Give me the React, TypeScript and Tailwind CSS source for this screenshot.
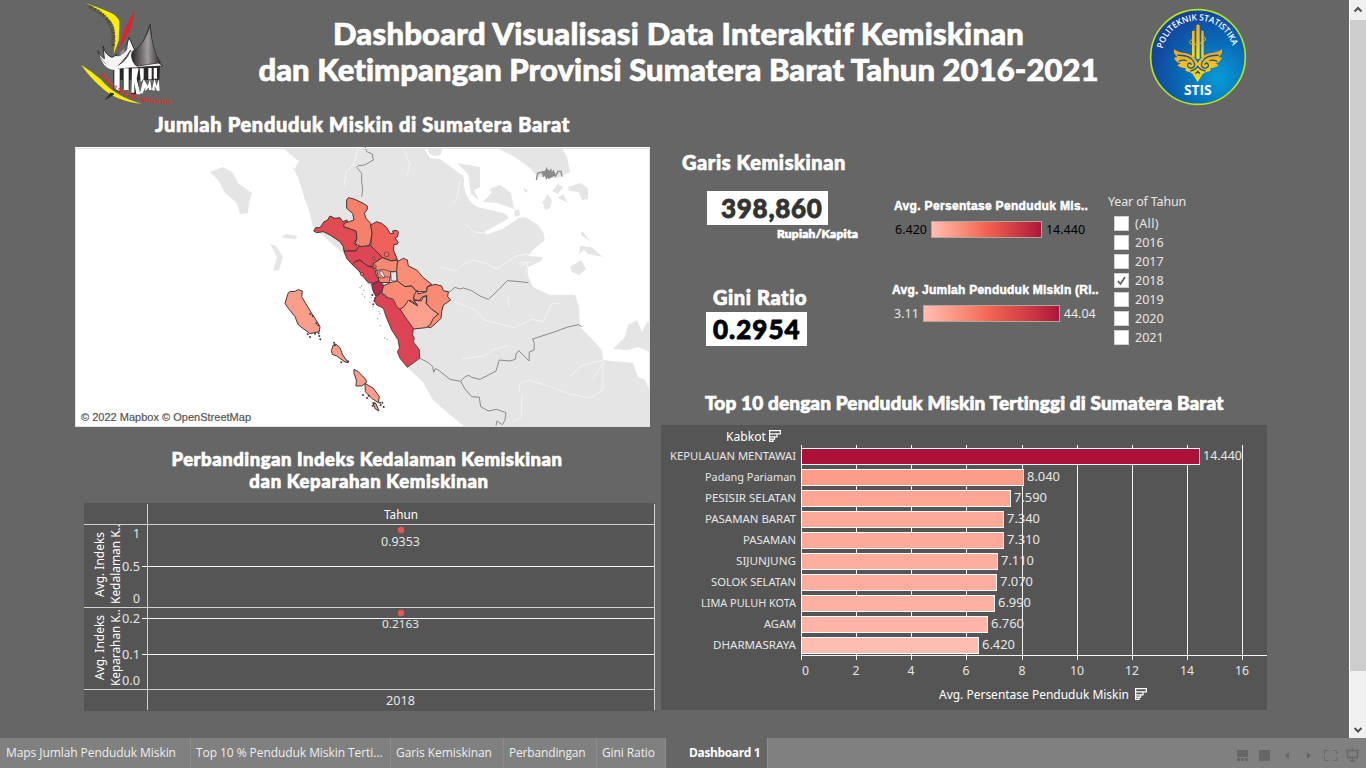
import { useLayoutEffect, useRef, useState } from "react";

/* Text spaced out so that its line fills exactly `w` pixels. */
function Fit({ w, className = "", children }: { w: number; className?: string; children: string }) {
  const ref = useRef<HTMLSpanElement>(null);
  const [gap, setGap] = useState(0);
  useLayoutEffect(() => {
    if (ref.current) setGap((w - ref.current.offsetWidth) / children.length);
  }, [w, children]);
  return (
    <span ref={ref} className={"inline-block shrink-0 whitespace-nowrap " + className} style={{ letterSpacing: gap }}>
      {children}
    </span>
  );
}

const display = "font-['Lato'] font-black text-white [-webkit-text-stroke:0.7px_currentColor]";

type LabelProps = { x: number; y: number; w: number; size?: number; anchor?: "start" | "end"; weight?: number; fill?: string; children: string };
function Label({ x, y, w, size = 12.5, anchor = "start", weight = 400, fill = "#e6e6e6", children }: LabelProps) {
  return (
    <text x={anchor === "end" ? x - w : x} y={y} fontSize={size} fontWeight={weight} fill={fill} textLength={w} lengthAdjust="spacingAndGlyphs">
      {children}
    </text>
  );
}

function MinangLogo() {
  return (
    <svg className="block h-[110px] w-[120px]" viewBox="0 0 360 330">
      <defs>
        <linearGradient id="roof" x1="0" y1="0" x2="1" y2="0">
          <stop offset="0" stopColor="#2a2627" />
          <stop offset=".55" stopColor="#a09c9d" />
          <stop offset="1" stopColor="#2c2829" />
        </linearGradient>
        <path id="arcTop" d="M54 24 Q112 50 122 92 Q128 122 121 162" />
        <path id="arcLow" d="M92 226 Q150 312 300 312" />
      </defs>
      <path d="M47 8 L112 34 Q146 48 148 66 L146 122 L131 162 Q139 104 131 78 Q116 44 47 8Z" fill="#ffee00" />
      <path d="M195 34 Q178 56 167 82 L143 153 L180 92Z" fill="#e0222b" />
      <path d="M33 194 Q68 216 92 238 Q138 292 215 311 Q135 304 90 258 Q60 232 33 194Z" fill="#ffee00" />
      <path d="M112 198 L270 196 L268 240 L132 240 L130 208Z" fill="#2b2728" />
      <path d="M130 207 H151 V278 L130 268Z M158 205 H179 V268 H158Z M182 205 H206 V283 H184Z" fill="#2b2728" />
      <path d="M133 207 H149 V274 L133 266Z M161 205 H176 V270 H161Z M186 205 H206 L200 236 L211 283 H199 L193 248 V278 H184Z M209 205 H221 V236 L212 246Z M210 278 L221 238 L233 258 L240 238 L245 270 H237 V262 L226 274 V262 L217 281Z M246 270 L253 236 L260 258 L266 238 L269 272 H261 L254 258 V272Z M235 204 H245 V238 H235Z M251 204 H261 V236 H251Z" fill="#fff" />
      <path d="M83 152 Q92 190 130 208 Q158 190 182 151 Q184 190 203 202 L279 198 Q234 172 246 130 L240 72 Q225 128 195 153 L177 112 Q168 155 126 172 Q105 164 99 138 L103 176 Q90 168 83 152Z" fill="#f4f4f4" stroke="#302c2d" strokeWidth="3" />
      <path d="M240 78 Q225 132 188 154 Q182 165 190 200 L272 188 Q248 156 240 78Z" fill="url(#roof)" stroke="#282425" strokeWidth="2" />
      <path d="M176 114 Q166 152 134 166 Q150 176 171 149Z" fill="url(#roof)" />
      <path d="M88 160 Q96 196 132 202 Q166 192 183 152 Q181 190 204 202 Q155 202 131 210 Q96 204 88 160Z" fill="#fff" />
      <path d="M106 299 L132 282 L120 279" stroke="#302c2d" strokeWidth="3" fill="#302c2d" />
      <text className="font-['Liberation_Sans']" fontSize="16" fontWeight="700" fill="#4c4527"><textPath href="#arcTop" textLength="148">IKATAN KELUARGA</textPath></text>
      <text className="font-['Liberation_Sans']" fontSize="19" fontWeight="700" fill="#d83226"><textPath href="#arcLow" textLength="238">MAHASISWA MINANG</textPath></text>
    </svg>
  );
}

function StisLogo() {
  return (
    <svg className="block h-[110px] w-[120px]" viewBox="0 0 360 330">
      <defs>
        <radialGradient id="blue" cx=".72" cy=".72" r=".75">
          <stop offset="0" stopColor="#079bd6" />
          <stop offset=".55" stopColor="#0868b5" />
          <stop offset="1" stopColor="#15429a" />
        </radialGradient>
        <linearGradient id="gold" x1="0" y1="0" x2="0" y2="1">
          <stop offset="0" stopColor="#f4a51c" />
          <stop offset="1" stopColor="#ffdc16" />
        </linearGradient>
        <path id="rim" d="M68 146 A108 108 0 0 1 279 146" />
      </defs>
      <circle cx="174" cy="171" r="142" fill="url(#blue)" stroke="#b5e619" strokeWidth="5" />
      <text className="font-['Open_Sans']" fontSize="26" fontWeight="600" fill="#fff"><textPath href="#rim" textLength="284" lengthAdjust="spacingAndGlyphs">POLITEKNIK STATISTIKA</textPath></text>
      <g fill="url(#gold)">
        <path d="M169 76 L174 73 L179 76 V176 H169Z M156 94 L164 91 V172 H156Z M184 91 L191 94 V172 H184Z" />
        <path d="M102 148 Q116 158 138 160 Q158 164 168 180 L173 190 L179 180 Q189 164 210 160 Q232 158 246 148 Q248 164 235 171 L246 173 Q240 187 226 190 L236 196 Q226 206 211 204 Q216 214 198 216 L188 222 L173 246 L158 222 L149 216 Q132 214 137 204 Q122 206 112 196 L122 190 Q108 187 102 173 L113 171 Q100 164 102 148Z" />
      </g>
      <g fill="none" stroke="#0b56a5" strokeWidth="4">
        <path d="M112 166 Q150 164 162 186 Q168 203 152 205 Q138 202 145 190 Q151 187 154 194 M236 166 Q198 164 186 186 Q180 203 196 205 Q210 202 203 190 Q197 187 194 194 M116 184 Q130 178 140 182 M232 184 Q218 178 208 182 M151 213 Q166 210 173 199 Q181 210 197 213 M166 221 L173 214 L180 221" />
      </g>
      <path d="M158 118 Q145 124 151 131 Q169 138 192 124 Q202 115 191 111" fill="none" stroke="#f5b51b" strokeWidth="3" />
      <text x="132" y="286" className="font-['Open_Sans']" fontSize="40" fontWeight="700" fill="#fff" textLength="83" lengthAdjust="spacingAndGlyphs">STIS</text>
    </svg>
  );
}

function SumatraMap() {
  return (
    <svg className="block h-[280px] w-[575px] bg-white" viewBox="75 147 575 280">
      <g fill="#e5e5e5">
        <path d="M283 148 L290 154 L297 160 L293 168 L298 177 L305 200 L309 210 L313 227 L345 255 L380 300 L407 367 L423 382 L433 400 L450 415 L465 427 H650 V392 L645 380 L638 377 L633 363 L603 360 L602 350 L590 337 L580 327 L579 307 L575 295 L550 295 L533 287 L528 275 L528 267 L541 261 L543 257 L528 256 L533 250 L545 240 L543 232 L538 225 L525 217 L513 219 L500 228 L484 232 L508 219 L508 212 L490 208 L475 203 L466 190 L463 175 L450 163 L440 159 L430 158 L424 148Z" />
        <path d="M427 148 Q430 159 440 155 L443 148Z M457 163 L480 167 L480 187 L474 190 L479 200 L471 194 L468 174Z M491 188 L500 185 L511 193 L514 209 L497 203 L482 202Z M514 211 L519 209 L520 215 L515 217Z M497 148 L515 157 L530 168 L538 177 L557 178 L570 172 L567 157 L562 148Z M568 187 L580 183 L588 188 L588 199 L582 200 L579 192 L569 191Z M552 191 L558 184 L563 187 L558 194Z M543 203 L547 194 L552 200 L550 208 L545 210Z M523 188 L528 190 L526 193Z M558 198 L563 194 L568 203Z M541 202 L548 198 L551 203Z M580 246 L591 247 L603 257 L588 254 L584 250 L579 254Z M570 267 L581 260 L586 269 L579 275 L572 272Z M582 231 L591 242 L581 235Z M613 349 L625 337 L628 325 L637 320 L642 332 L647 322 L650 323 V352 L638 347 L627 350Z" />
        <path d="M210 172 L223 167 L232 172 L238 183 L252 193 L249 203 L248 213 L240 214 L237 203 L225 193 L218 180Z M282 236 L287 234 L297 236 L296 239 L283 238Z M270 244 L276 246 L283 257 L279 270 L273 271 L277 257Z" />
      </g>
      <path d="M283 158 L290 162 L299 160 L295 169 L288 161Z" fill="#fff" />
      <g fill="none" stroke="#f4f4f4" strokeWidth="1">
        <path d="M358 149 L353 165 L346 172 L344 187 M441 267 L455 271 L462 265 L473 260 L485 263 L497 269 L516 256 L535 253 M465 224 L474 232 L486 233 M460 180 L457 198 L453 204 M455 302 L475 310 L484 320 L515 328 L532 319 L543 322 L552 303 L560 304 M462 359 L484 356 L494 349 L508 346 M520 392 L519 384 L529 380 L548 386 L570 394 L590 398 L603 390 L603 360 L583 365 L570 376 M603 362 L593 379 M522 395 L521 418 L513 421 M508 297 L509 307 M404 150 L410 164 L407 176 M519 263 L532 262 M520 266 L528 263 L526 274" />
        <path d="M465 182 Q467 202 480 206 L505 212 L515 219 L501 228 L486 233" strokeWidth="3" stroke="#fff" />
        <path d="M440 157 L463 174 M480 203 L491 191" strokeWidth="3" stroke="#fff" />
      </g>
      <g transform="translate(400 140) scale(.33333)" fill="none" stroke="#8a8a8a" strokeWidth="3">
        <path d="M143 457 L150 455 L165 442 L180 447 L190 444 L215 452 L240 468 L265 478 L290 455 L322 422 L350 424 L385 428" />
        <path d="M60 655 L85 668 L98 680 L101 697 L106 686 L115 690 L150 718 L182 724 L195 710 L207 706 L215 712 L240 718 L266 705 L288 693 L298 660 L330 663 L346 658 L348 642 L356 632 L377 652 L387 663 L388 636 L402 630 L403 610 L398 597 L460 577 L500 562 L535 554 L545 560" />
        <path d="M182 724 L195 747 L215 770 L238 772 L242 800 L265 813 L290 808 L318 818 L315 840 L307 854 L291 843 L288 857" />
        <path d="M-105 20 L-100 35 L-83 42 L-80 60 L-106 75 L-125 77 L-130 82 L-115 100 L-115 125 L-112 150 L-115 170" />
        <path d="M409 120 L413 100 L430 95 L430 110 L440 86 L446 116 L453 87 L452 108 L460 93 L467 108 L474 94 L483 94 L486 110 M425 102 L449 97 L465 108 M438 91 L439 118 M442 103 L461 101" strokeWidth="4" />
        <path d="M426 98 L442 88 L452 94 L464 98 L462 108 L448 116 L436 110Z" fill="#8a8a8a" stroke="none" />
      </g>
      <g transform="translate(280 180) scale(.33333)" stroke="#453536" strokeWidth="3" strokeLinejoin="round">
        <path fill="#e04a53" d="M101 153 L107 143 L120 143 L132 125 L142 121 L150 108 L165 115 L180 113 L188 125 L201 120 L203 130 L191 140 L215 147 L228 153 L231 175 L222 188 L235 205 L228 213 L192 213 L190 200 L180 185 L150 165 L130 155 L110 158Z" />
        <path fill="#f5806c" d="M200 60 L205 53 L222 57 L250 70 L262 78 L262 88 L253 100 L258 115 L272 130 L276 160 L272 185 L268 195 L250 203 L225 192 L231 175 L228 153 L191 140 L192 130 L222 120 L218 100 L200 85Z" />
        <path fill="#ef6259" d="M272 135 L290 125 L305 130 L320 142 L330 160 L340 161 L338 153 L348 151 L355 155 L353 170 L345 174 L355 187 L350 194 L342 193 L340 210 L352 238 L335 243 L307 233 L290 215 L272 197 L276 160Z" />
        <path fill="#dd4654" d="M192 213 L228 213 L235 200 L272 197 L290 215 L307 233 L285 250 L280 260 L262 258 L240 240 L225 245 L218 255 L200 235Z" />
        <path fill="#dc4454" d="M225 245 L240 240 L262 258 L275 262 L285 268 L290 290 L298 300 L280 310 L265 308 L250 290 L235 270 L218 255Z" />
        <path fill="#b8294e" d="M275 313 L300 303 L310 315 L310 325 L300 340 L288 350 L280 335Z" />
        <path fill="#f88a73" d="M278 252 L307 233 L335 243 L353 240 L352 275 L333 275 L328 308 L298 307 L290 270Z" />
        <path fill="none" strokeWidth="2" d="M290 272 L310 268 L333 275 M295 290 L305 295 L320 290 L330 292" />
        <path fill="#fff" strokeWidth="2" d="M299 274 L306 273 L315 291 L310 292 L301 283Z" />
        <path fill="#e5e5e5" strokeWidth="2" d="M332 276 L350 275 L351 304 L334 302Z" />
        <path fill="#f98d76" d="M352 245 L370 235 L382 240 L385 258 L410 270 L430 293 L455 313 L442 320 L440 335 L410 335 L395 318 L375 320 L352 305 L350 275Z" />
        <path fill="#f98b75" d="M310 318 L330 308 L352 303 L375 320 L395 318 L410 335 L402 350 L402 362 L415 378 L390 360 L380 370 L370 385 L355 388 L335 365 L315 345 L305 340Z" />
        <path fill="#f98b75" d="M442 320 L465 313 L485 318 L490 332 L505 335 L503 350 L512 360 L498 370 L490 375 L485 395 L483 415 L465 432 L452 443 L441 441 L450 420 L475 402 L450 385 L440 370 L440 346 L425 352 L420 361 L402 360 L402 345 L412 330 L415 342 L440 335Z" />
        <path fill="#fba08d" d="M360 388 L372 380 L385 361 L414 378 L402 361 L424 363 L430 350 L440 350 L438 370 L455 388 L475 402 L460 415 L450 435 L438 443 L400 447 L385 430Z" />
        <path fill="#dc4353" strokeWidth="2.5" d="M288 350 L305 338 L315 350 L340 358 L350 380 L362 390 L375 410 L400 445 L398 465 L403 475 L400 485 L418 510 L419 535 L382 562 L360 535 L352 515 L358 505 L355 480 L335 450 L318 410 L310 385 L290 375 L283 362Z" />
        <g fill="#ee6d60" strokeWidth="2"><circle cx="320" cy="223" r="7" /><circle cx="281" cy="235" r="4" /><circle cx="284" cy="260" r="5" /><circle cx="246" cy="282" r="5" /></g>
      </g>
      <g transform="translate(270 280) scale(.33333)" fill="#fb9d8b" stroke="#453536" strokeWidth="3" strokeLinejoin="round">
        <path d="M55 38 L60 35 L75 34 L85 29 L97 33 L95 50 L107 70 L125 100 L135 115 L150 140 L148 155 L120 161 L85 135 L75 110 L55 85 L45 70Z" />
        <path d="M190 195 L197 192 L210 203 L218 225 L235 248 L225 246 L200 228 L187 223 L184 212Z M252 268 L265 275 L287 298 L290 307 L275 318 L258 318 L259 300 L252 280Z M285 310 L310 325 L328 350 L325 368 L305 355 L286 335Z M308 368 L318 371 L327 393 L316 387Z" />
        <g fill="#453536" stroke="none">
          {[[121, 102], [128, 108], [139, 130], [145, 136], [146, 160], [151, 178], [148, 168], [113, 163], [120, 171], [135, 161], [192, 188], [195, 196], [214, 247], [234, 244], [279, 345], [291, 354], [296, 347], [308, 377], [313, 370], [330, 368], [332, 375], [341, 381], [337, 368], [313, 63], [310, 73], [315, 55], [307, 45]].map(([cx, cy], i) => <circle key={i} cx={cx} cy={cy} r="3" />)}
        </g>
        <g fill="#999" stroke="none">
          {[[275, 18], [282, 31], [277, 43], [284, 51], [270, 23], [304, 52], [309, 80], [327, 95], [323, 116], [331, 137], [344, 174], [352, 178], [300, 67], [330, 101]].map(([cx, cy], i) => <circle key={i} cx={cx} cy={cy} r="2" />)}
        </g>
      </g>
      <path d="M75.5 148.5 H649.5 V426.5 H75.5Z" fill="none" stroke="#e2e2e2" />
      <text x="81" y="421" className="font-['Liberation_Sans']" fontSize="11" fill="#555" stroke="#555" strokeWidth=".2" textLength="170">© 2022 Mapbox © OpenStreetMap</text>
    </svg>
  );
}

function IndexChart() {
  const hlines = [524, 607, 689];
  const grids = [566, 618, 654];
  return (
    <svg className="block h-[208px] w-[571px] bg-[#555555] font-['Noto_Sans']" viewBox="84 503 571 208">
      <g shapeRendering="crispEdges">
        {hlines.map((y) => <rect key={y} x="84" y={y} width="571" height="1" fill="#d0d0d0" />)}
        {grids.map((y) => <rect key={y} x="142" y={y} width="513" height="1" fill="#f5f5f5" />)}
        <rect x="147" y="504" width="1" height="206" fill="#d0d0d0" />
        <rect x="654" y="504" width="1" height="206" fill="#d0d0d0" />
      </g>
      <Label x={384} y={519} w={34} fill="#fff">Tahun</Label>
      <Label x={140} y={538} w={7} anchor="end">1</Label>
      <Label x={140} y={571} w={18} anchor="end">0.5</Label>
      <Label x={140} y={603} w={7} anchor="end">0</Label>
      <Label x={140} y={623} w={18} anchor="end">0.2</Label>
      <Label x={140} y={659} w={18} anchor="end">0.1</Label>
      <Label x={140} y={685} w={18} anchor="end">0.0</Label>
      <Label x={381} y={546} w={39}>0.9353</Label>
      <Label x={382} y={628} w={37} size={11.5}>0.2163</Label>
      <Label x={386} y={705} w={29}>2018</Label>
      <circle cx="401" cy="530" r="3.2" fill="#e15759" />
      <circle cx="401" cy="613" r="3.2" fill="#e15759" />
      <g transform="translate(104 597) rotate(-90)"><Label x={0} y={0} w={65} size={12} fill="#fff">Avg. Indeks</Label></g>
      <g transform="translate(120 604) rotate(-90)"><Label x={0} y={0} w={80} size={12} fill="#fff">Kedalaman K..</Label></g>
      <g transform="translate(104 680) rotate(-90)"><Label x={0} y={0} w={65} size={12} fill="#fff">Avg. Indeks</Label></g>
      <g transform="translate(120 686) rotate(-90)"><Label x={0} y={0} w={77} size={12} fill="#fff">Keparahan K..</Label></g>
    </svg>
  );
}

function SortIcon({ x, y }: { x: number; y: number }) {
  return <path transform={`translate(${x} ${y})`} d="M.6 .6 H11.4 V3.8 H.6Z M.6 3.8 H8 V6.8 H.6Z M.6 6.8 H5.6 V9.200 H.6Z M.6 9.200 H4 V11.4 H.6Z" fill="none" stroke="#fff" strokeWidth="1.2" />;
}

const bars: [string, number, string, number, number, string][] = [
  ["KEPULAUAN MENTAWAI", 126, "14.440", 1200, 38, "#ad1139"],
  ["Padang Pariaman", 91, "8.040", 1024, 32, "#fd9d89"],
  ["PESISIR SELATAN", 91, "7.590", 1011, 32, "#fea593"],
  ["PASAMAN BARAT", 91, "7.340", 1004, 32, "#feaa99"],
  ["PASAMAN", 53, "7.310", 1004, 32, "#feaa9a"],
  ["SIJUNJUNG", 60, "7.110", 998, 32, "#feae9e"],
  ["SOLOK SELATAN", 85, "7.070", 997, 32, "#feae9f"],
  ["LIMA PULUH KOTA", 95, "6.990", 995, 32, "#feb0a1"],
  ["AGAM", 32, "6.760", 988, 32, "#feb5a7"],
  ["DHARMASRAYA", 83, "6.420", 979, 32, "#febdb1"],
];
const ticks = [801, 856, 911, 966, 1022, 1077, 1132, 1187, 1242];

function PovertyChart() {
  return (
    <svg className="block h-[285px] w-[606px] bg-[#555555] font-['Noto_Sans']" viewBox="661 425 606 285">
      <g shapeRendering="crispEdges">
        {ticks.map((x) => <rect key={x} x={x} y="445" width="1" height="215" fill="#f5f5f5" />)}
        <rect x="801" y="655" width="466" height="1" fill="#f5f5f5" />
        {bars.map(([name, , , end, , color], i) => (
          <rect key={name} x="801.5" y={448.5 + i * 21} width={end - 802} height="16" fill={color} stroke="#fff" />
        ))}
      </g>
      <Label x={726} y={441} w={40} fill="#fff">Kabkot</Label>
      <SortIcon x={769} y={430} />
      {bars.map(([name, w, value, end, vw], i) => (
        <g key={name}>
          <Label x={796} y={460 + i * 21} w={w} size={11.5} anchor="end">{name}</Label>
          <Label x={end + 3} y={460 + i * 21} w={vw + 1}>{value}</Label>
        </g>
      ))}
      {ticks.map((x, i) => {
        const w = i > 4 ? 14 : 7;
        return <Label key={x} x={i === 0 ? 802 : x - w / 2} y={675} w={w}>{String(i * 2)}</Label>;
      })}
      <Label x={939} y={699} w={190} fill="#fff">Avg. Persentase Penduduk Miskin</Label>
      <SortIcon x={1135} y={688} />
    </svg>
  );
}

const years: [string, number][] = [["(All)", 24], ["2016", 29], ["2017", 29], ["2018", 29], ["2019", 29], ["2020", 29], ["2021", 29]];

function YearFilter() {
  return (
    <div className="ml-2 w-[100px] pt-[45px] font-['Noto_Sans'] text-[#e6e6e6]">
      <div className="h-[19px] text-[12.5px] leading-[19px]"><Fit w={78}>Year of Tahun</Fit></div>
      <div className="pl-[6px] pt-[3px]">
        {years.map(([y, w]) => (
          <div key={y} className="flex h-[19px] items-center gap-[6px]">
            <span className="flex size-[15px] items-center justify-center border border-[#d0d0d0] bg-white">
              {y === "2018" && (
                <svg className="size-[11px]" viewBox="0 0 11 11"><path d="M2 6 L4.5 9 L9 2" fill="none" stroke="#555" strokeWidth="1.6" /></svg>
              )}
            </span>
            <span className="text-[12.5px] leading-[19px]"><Fit w={w}>{y}</Fit></span>
          </div>
        ))}
      </div>
    </div>
  );
}

const ramp = "h-[17px] border border-[#b0a69e] bg-linear-to-r from-[#ffbeb2] via-[#f26250] to-[#ae123a]";
const legendTitle = "h-[24px] font-['Liberation_Sans'] text-[12px] leading-[20px] font-bold text-white [-webkit-text-stroke:0.5px_white]";

const tabs: [string, number, string][] = [
  ["Maps Jumlah Penduduk Miskin", 170, "w-[191px] pl-[6px]"],
  ["Top 10 % Penduduk Miskin Terti…", 187, "w-[200px] pl-[5px]"],
  ["Garis Kemiskinan", 96, "w-[113px] pl-[5px]"],
  ["Perbandingan", 77, "w-[93px] pl-[5px]"],
  ["Gini Ratio", 53, "w-[69px] pl-[5px]"],
];

export default function App() {
  return (
    <div className="flex h-[768px] w-[1366px] flex-col overflow-hidden bg-[#666666]">
      <div className="flex h-[738px]">
        <main className="w-[1349px]">
          <header className="flex h-[110px] pl-[70px]">
            <MinangLogo />
            <h1 className={"flex w-[960px] flex-col items-center pt-[15px] pl-[17px] text-[31px] leading-[36px] " + display}>
              <Fit w={692}>Dashboard Visualisasi Data Interaktif Kemiskinan</Fit>
              <Fit w={841}>dan Ketimpangan Provinsi Sumatera Barat Tahun 2016-2021</Fit>
            </h1>
            <div className="-ml-[10px]"><StisLogo /></div>
          </header>
          <div className="flex gap-[6px] pl-[75px]">
            <section className="w-[580px]">
              <h2 className={"h-[37px] pl-[80px] pt-[2px] text-[20px] leading-[25px] " + display}><Fit w={415}>Jumlah Penduduk Miskin di Sumatera Barat</Fit></h2>
              <SumatraMap />
              <h2 className={"flex h-[76px] flex-col items-center pt-[21px] pr-[4px] pl-[8px] text-[18.5px] leading-[22px] " + display}>
                <Fit w={391}>Perbandingan Indeks Kedalaman Kemiskinan</Fit>
                <div className="pl-1"><Fit w={239}>dan Keparahan Kemiskinan</Fit></div>
              </h2>
              <div className="pl-[9px]"><IndexChart /></div>
            </section>
            <section className="w-[606px]">
              <div className="flex h-[275px] pt-[37px]">
                <div className="w-[231px]">
                  <h2 className={"h-[44px] pl-[21px] text-[20px] leading-[30px] " + display}><Fit w={164}>Garis Kemiskinan</Fit></h2>
                  <div className="ml-[46px] h-[34px] w-[121px] bg-white pl-[14px] font-['Lato'] text-[26px] leading-[34px] font-black text-[#333] [-webkit-text-stroke:0.8px_#333]"><Fit w={102}>398,860</Fit></div>
                  <div className={"h-[55px] pl-[116px] text-[12px] leading-[18px] " + display}><Fit w={81}>Rupiah/Kapita</Fit></div>
                  <h2 className={"h-[32px] pl-[52px] pt-[4px] text-[20px] leading-[26px] " + display}><Fit w={95}>Gini Ratio</Fit></h2>
                  <div className="ml-[45px] h-[34px] w-[101px] bg-white pl-[7px] font-['Lato'] text-[26px] leading-[34px] font-black text-black [-webkit-text-stroke:0.8px_black]"><Fit w={88}>0.2954</Fit></div>
                </div>
                <div className="w-[208px] pt-[49px]">
                  <div className={"pl-[2px] " + legendTitle}><Fit w={194}>Avg. Persentase Penduduk Mis..</Fit></div>
                  <div className="flex h-[60px] gap-1 pl-[3px] pt-[1px] font-['Noto_Sans'] text-[12.5px] leading-[17px] text-black">
                    <Fit w={32}>6.420</Fit><div className={"w-[111px] " + ramp} /><Fit w={39}>14.440</Fit>
                  </div>
                  <div className={legendTitle}><Fit w={207}>Avg. Jumlah Penduduk Miskin (Ri..</Fit></div>
                  <div className="flex gap-1 pl-[2px] pt-[1px] font-['Noto_Sans'] text-[12.5px] leading-[17px] text-[#e8e8e8]">
                    <Fit w={25}>3.11</Fit><div className={"w-[137px] " + ramp} /><Fit w={32}>44.04</Fit>
                  </div>
                </div>
                <YearFilter />
              </div>
              <h2 className={"h-[40px] pl-[44px] pt-[5px] text-[19px] leading-[26px] " + display}><Fit w={519}>Top 10 dengan Penduduk Miskin Tertinggi di Sumatera Barat</Fit></h2>
              <PovertyChart />
            </section>
          </div>
        </main>
        <aside className="flex w-[17px] flex-col items-center border-l border-white bg-[#f0f0f0]">
          <svg className="h-[20px] w-[16px]" viewBox="0 0 16 20"><path d="M4.5 11.5 L8 8 L11.5 11.5" fill="none" stroke="#505050" strokeWidth="2" /></svg>
          <div className="h-[651px] w-full bg-[#cdcdcd]" />
          <div className="flex-1" />
          <svg className="h-[17px] w-[16px]" viewBox="0 0 16 17"><path d="M4.5 7 L8 10.5 L11.5 7" fill="none" stroke="#505050" strokeWidth="2" /></svg>
        </aside>
      </div>
      <footer className="flex h-[30px] bg-[#808080] font-['Open_Sans'] text-[12px] leading-[30px] text-[#eeeeee]">
        {tabs.map(([name, w, cls]) => (
          <div key={name} className={"border-r border-[#8c8c8c] " + cls}><Fit w={w}>{name}</Fit></div>
        ))}
        <div className="w-[102px] border-r border-[#909090] bg-[#666666] pl-[23px] font-bold text-white"><Fit w={71}>Dashboard 1</Fit></div>
        <svg className="ml-auto h-[30px] w-[136px]" viewBox="1230 738 136 30">
          <g fill="#666">
            <path d="M1237 750h11v7h-11z M1237 758h3v3h-3z M1241 758h3v3h-3z M1245 758h3v3h-3z M1259 750h11v11h-11z M1289 752v7l-4-3.5z M1307 752v7l4-3.5z" />
          </g>
          <g fill="none" stroke="#666">
            <path d="M1324.500 754v-3.500h4 M1333 750.500h4v3.500 M1324.500 757v3.500h4 M1333 760.500h4v-3.500" />
            <path d="M1346 750.500h13 M1347.500 751v6.500h10v-6.500 M1352.500 748v2 M1352.500 758v3 M1350 761h5" strokeWidth="1.300" />
          </g>
        </svg>
      </footer>
    </div>
  );
}
